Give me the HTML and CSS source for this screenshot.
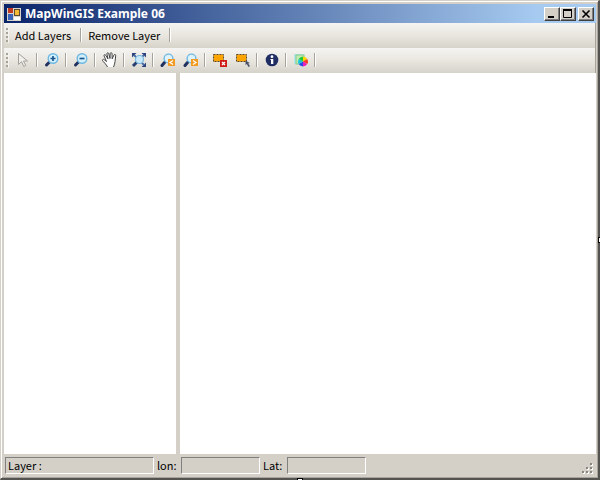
FILE: index.html
```html
<!DOCTYPE html>
<html lang="en">
<head>
    <meta charset="UTF-8">
    <meta name="viewport" content="width=device-width, initial-scale=1.0">
    <title>MapWinGIS Example 06</title>
    <link rel="stylesheet" href="styles.css">
</head>
<body>
    <div class="window">
        <header class="title-bar">
            <svg class="app-icon" width="14" height="14" viewBox="0 0 14 14">
                <path d="M0 1h14v13H0z" fill="#d8d4cc"/>
                <rect x="1" y="1" width="5" height="5" fill="#c23a22"/>
                <rect x="1" y="7" width="5" height="6" fill="#3b63b8"/>
                <rect x="7.500" y="2.500" width="5" height="6" fill="#f4ba35" stroke="#5a4a32"/>
                <rect x="7" y="10" width="6" height="3" fill="#fff"/>
            </svg>
            <h1>MapWinGIS Example 06</h1>
            <div class="window-buttons">
                <button type="button" aria-label="Minimize">
                    <svg width="10" height="10" viewBox="0 0 10 10"><path d="M1 8h6" stroke="#000" stroke-width="2"/></svg>
                </button>
                <button type="button" aria-label="Maximize">
                    <svg width="10" height="10" viewBox="0 0 10 10"><path d="M.5 1v7.500h8V1" fill="none" stroke="#000"/><path d="M0 1h9" stroke="#000" stroke-width="2"/></svg>
                </button>
                <button type="button" class="close" aria-label="Close">
                    <svg width="10" height="10" viewBox="0 0 10 10"><path d="M1.500 1.500l7 7M8.500 1.500l-7 7" stroke="#000" stroke-width="1.600"/></svg>
                </button>
            </div>
        </header>

        <nav class="toolbar">
            <span class="grip"></span>
            <button type="button" class="text-button">Add Layers</button>
            <span class="separator"></span>
            <button type="button" class="text-button">Remove Layer</button>
            <span class="separator"></span>
        </nav>

        <nav class="toolbar">
            <span class="grip"></span>
            <button type="button" class="tool" aria-label="Select">
                <svg width="16" height="16" viewBox="0 0 16 16"><path d="M3.500 1.500v11l3-2.800 2.300 4.800 2-1-2.300-4.500h4z" fill="#f1efea" stroke="#a3a19d"/></svg>
            </button>
            <span class="separator"></span>
            <button type="button" class="tool" aria-label="Zoom in">
                <svg width="16" height="16" viewBox="0 0 16 16"><path d="M5.500 10l-3 3" stroke="#20305f" stroke-width="3" stroke-linecap="round"/><circle cx="9" cy="6.500" r="4.800" fill="#d2effc" stroke="#6fb8e2" stroke-width="1.400"/><path d="M6.500 6.500h5M9 4v5" stroke="#1d568e" stroke-width="1.700"/></svg>
            </button>
            <span class="separator"></span>
            <button type="button" class="tool" aria-label="Zoom out">
                <svg width="16" height="16" viewBox="0 0 16 16"><path d="M5.500 10l-3 3" stroke="#20305f" stroke-width="3" stroke-linecap="round"/><circle cx="9" cy="6.500" r="4.800" fill="#d2effc" stroke="#6fb8e2" stroke-width="1.400"/><path d="M6.500 6.500h5" stroke="#1d568e" stroke-width="1.700"/></svg>
            </button>
            <span class="separator"></span>
            <button type="button" class="tool" aria-label="Pan">
                <svg width="16" height="16" viewBox="0 0 16 16"><path d="M5.500 15C4.500 12.500 1 9.500.5 8.500c-.2-1.200 1-1.500 1.800-.7L4.500 9.500 2 3.800c-.3-1.200 1.200-1.600 1.700-.6L6 7 4.900 1.800c0-1.300 1.500-1.400 1.800-.2L8 6.500l.2-5c.2-1.200 1.700-1 1.800.1l.2 5.200L12 3c.5-1 1.900-.6 1.700.5l-.6 5.800c-.1 2-1 3.700-1.600 5.700" fill="#fff" stroke="#333" stroke-width=".9" stroke-linejoin="round"/></svg>
            </button>
            <span class="separator"></span>
            <button type="button" class="tool" aria-label="Zoom to full extent">
                <svg width="16" height="16" viewBox="0 0 16 16"><path d="M1 5.500V1h4.500zM10.500 1H15v4.500zM15 10.500V15h-4.500z" fill="#2c4580"/><path d="M6 10l-4 4" stroke="#263d70" stroke-width="3"/><path d="M3 3l3 3M13 3l-3 3M13 13l-3-3" stroke="#486aa0" stroke-width="1.800"/><circle cx="8.500" cy="7.500" r="4" fill="#c9e9fa" stroke="#7bb6de" stroke-width="1.200"/></svg>
            </button>
            <span class="separator"></span>
            <button type="button" class="tool" aria-label="Zoom to previous">
                <svg width="16" height="16" viewBox="0 0 16 16"><path d="M4.500 10.500l-2.500 3" stroke="#20305f" stroke-width="3" stroke-linecap="round"/><circle cx="8.500" cy="6.500" r="4.400" fill="#def2fb" stroke="#6fb8e2" stroke-width="1.400"/><rect x="8" y="7" width="7" height="7" fill="#f39a23"/><path d="M13 8.500l-3 2 3 2" fill="none" stroke="#fff" stroke-width="1.200"/></svg>
            </button>
            <button type="button" class="tool" aria-label="Zoom to next">
                <svg width="16" height="16" viewBox="0 0 16 16"><path d="M4.500 10.500l-2.500 3" stroke="#20305f" stroke-width="3" stroke-linecap="round"/><circle cx="8.500" cy="6.500" r="4.400" fill="#def2fb" stroke="#6fb8e2" stroke-width="1.400"/><rect x="8" y="7" width="7" height="7" fill="#f39a23"/><path d="M10 8.500l3 2-3 2" fill="none" stroke="#fff" stroke-width="1.200"/></svg>
            </button>
            <span class="separator"></span>
            <button type="button" class="tool" aria-label="Clear selection">
                <svg width="16" height="16" viewBox="0 0 16 16"><rect x="1.500" y="2.500" width="10" height="7" fill="#ffa500" stroke="#5a4a32" stroke-dasharray="2 1"/><rect x="8" y="8" width="7" height="7" fill="#d01c18"/><path d="M10 10l3 3M13 10l-3 3" stroke="#fff" stroke-width="1.300"/></svg>
            </button>
            <button type="button" class="tool" aria-label="Select features">
                <svg width="16" height="16" viewBox="0 0 16 16"><rect x="1.500" y="2.500" width="10" height="7" fill="#ffa500" stroke="#5a4a32" stroke-dasharray="2 1"/><path d="M10.500 8.500v4.500l1.300-1 1.700 3 1.500-1-1.800-2.500 1.600-.5z" fill="#4a5068"/></svg>
            </button>
            <span class="separator"></span>
            <button type="button" class="tool" aria-label="Identify">
                <svg width="16" height="16" viewBox="0 0 16 16"><circle cx="8" cy="8" r="6.300" fill="#202e64"/><circle cx="8" cy="4.700" r="1.400" fill="#fff"/><path d="M6.500 7h2.800v5H7V8h-.5z" fill="#fff"/></svg>
            </button>
            <span class="separator"></span>
            <button type="button" class="tool" aria-label="Colors">
                <svg width="16" height="16" viewBox="0 0 16 16"><path d="M1 2h9v2H3v8H1z" fill="#b4e6ea"/><rect x="3" y="3" width="8" height="9" fill="#c5ecb0" stroke="#83c790"/><path d="M10 9.500v-5a5 5 0 0 1 4.300 2.500z" fill="#ffd600"/><path d="M10 9.500L14.300 7a5 5 0 0 1 0 5z" fill="#f83a22"/><path d="M10 9.500l4.300 2.500a5 5 0 0 1-4.300 2.500z" fill="#e721b9"/><path d="M10 9.500v5A5 5 0 0 1 5.700 12z" fill="#2948e8"/><path d="M10 9.500L5.700 12a5 5 0 0 1 0-5z" fill="#16c8de"/><path d="M10 9.500L5.700 7A5 5 0 0 1 10 4.500z" fill="#22c63a"/></svg>
            </button>
            <span class="separator"></span>
        </nav>

        <main class="workspace">
            <aside class="legend"></aside>
            <div class="splitter"></div>
            <section class="map"></section>
        </main>

        <footer class="status-bar">
            <span class="field layer-field">Layer :</span>
            <label for="lon">lon:</label>
            <output class="field" id="lon"></output>
            <label for="lat">Lat:</label>
            <output class="field" id="lat"></output>
            <svg class="size-grip" width="12" height="12" viewBox="0 0 12 12">
                <path d="M9 1h2v2H9zM5 5h2v2H5zM9 5h2v2H9zM1 9h2v2H1zM5 9h2v2H5zM9 9h2v2H9z" fill="#fff"/>
                <path d="M8 0h2v2H8zM4 4h2v2H4zM8 4h2v2H8zM0 8h2v2H0zM4 8h2v2H4zM8 8h2v2H8z" fill="#8a877f"/>
            </svg>
        </footer>
        <span class="handle handle-right"></span>
        <span class="handle handle-bottom"></span>
    </div>
</body>
</html>
```
FILE: styles.css
```css
* {
    box-sizing: border-box;
}
body {
    margin: 0;
    font-family: "Noto Sans CJK JP", "Noto Sans", sans-serif;
    font-size: 11px;
    line-height: 16px;
    color: #000;
}
button {
    font: inherit;
    color: inherit;
    padding: 0;
    border: none;
    background: none;
}
svg {
    display: block;
}
.window {
    position: relative;
    display: flex;
    flex-direction: column;
    height: 100vh;
    padding: 2px 1px 1px 2px;
    background-color: #d4d0c8;
    border: 1px solid #d4d0c8;
    border-right: 2px solid #55534f;
    border-bottom: 2px solid #55534f;
    box-shadow: inset 1px 1px #fff, inset -1px -1px #a8a59e;
}
.title-bar {
    display: flex;
    align-items: center;
    height: 19px;
    margin: 1px 1px 0;
    padding: 0 2px 0 3px;
    background: linear-gradient(to right, #0a246a, #a6caf0 90%);
}
.title-bar h1 {
    flex: 1;
    margin: 0 0 0 4px;
    font-family: "Noto Sans", sans-serif;
    font-size: 12px;
    font-weight: bold;
    color: #fff;
}
.window-buttons {
    display: flex;
}
.window-buttons button {
    display: flex;
    align-items: center;
    justify-content: center;
    width: 16px;
    height: 14px;
    background-color: #d4d0c8;
    border: 1px solid;
    border-color: #fff #404040 #404040 #fff;
    box-shadow: inset -1px -1px #808080;
}
.window-buttons .close {
    margin-left: 2px;
}
.toolbar {
    display: flex;
    align-items: center;
    height: 25px;
    margin: 0 1px;
    padding: 0 0 1px 2px;
    background: linear-gradient(#f5f4f2, #e9e6df 50%, #d6d3cb);
    border-right: 1px solid #a6a39b;
}
.grip {
    width: 3px;
    height: 15px;
    margin-right: 2px;
    background: repeating-linear-gradient(#a5a29a 0 2px, transparent 2px 4px);
    border-right: 1px solid #f5f4f0;
}
.text-button {
    padding: 0 7px 0 4px;
}
.separator {
    width: 2px;
    height: 14px;
    margin: 0 2px;
    background-color: #a6a39b;
    border-right: 1px solid #fff;
}
.tool {
    display: flex;
    align-items: center;
    justify-content: center;
    width: 23px;
    height: 22px;
}
.workspace {
    display: flex;
    flex: 1;
    margin: 0 1px;
}
.legend {
    width: 29%;
    background-color: #fff;
}
.splitter {
    width: 4px;
    background-color: #d4d0c8;
}
.map {
    flex: 1;
    background-color: #fff;
}
.status-bar {
    display: flex;
    align-items: center;
    gap: 3px;
    height: 23px;
    margin: 0 1px;
    padding: 0 2px 1px 1px;
}
.status-bar label {
    width: 21px;
}
.field {
    width: 79px;
    height: 17px;
    padding-left: 2px;
    border: 1px solid;
    border-color: #808080 #fff #fff #808080;
    line-height: 15px;
}
.layer-field {
    width: 149px;
}
.size-grip {
    align-self: flex-end;
    margin-left: auto;
    margin-bottom: 1px;
}
/* resize handles on the window frame */
.handle {
    position: absolute;
    background-color: #fff;
    border: 1px solid #000;
}
.handle-right {
    top: 50%;
    right: -3px;
    width: 3px;
    height: 6px;
    margin-top: -3px;
}
.handle-bottom {
    left: 50%;
    bottom: -3px;
    width: 6px;
    height: 3px;
    margin-left: -3px;
}
```
